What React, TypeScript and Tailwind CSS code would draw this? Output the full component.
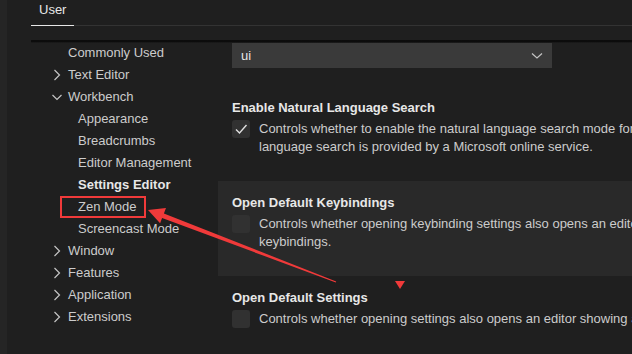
import React from 'react'

const font = { fontFamily: '"Liberation Sans", Arial, sans-serif' }

type NavItem = { label: string; level: 1 | 2; chevron?: 'right' | 'down'; bold?: boolean }

const nav: NavItem[] = [
  { label: 'Commonly Used', level: 1 },
  { label: 'Text Editor', level: 1, chevron: 'right' },
  { label: 'Workbench', level: 1, chevron: 'down' },
  { label: 'Appearance', level: 2 },
  { label: 'Breadcrumbs', level: 2 },
  { label: 'Editor Management', level: 2 },
  { label: 'Settings Editor', level: 2, bold: true },
  { label: 'Zen Mode', level: 2 },
  { label: 'Screencast Mode', level: 2 },
  { label: 'Window', level: 1, chevron: 'right' },
  { label: 'Features', level: 1, chevron: 'right' },
  { label: 'Application', level: 1, chevron: 'right' },
  { label: 'Extensions', level: 1, chevron: 'right' },
]

function Chevron({ dir }: { dir: 'right' | 'down' }) {
  return (
    <svg width="16" height="16" viewBox="0 0 16 16" className="shrink-0 text-[#c5c5c5]">
      {dir === 'right' ? (
        <path d="M2.5 3l5 5-5 5" fill="none" stroke="currentColor" strokeWidth="1.2" />
      ) : (
        <path d="M0.5 6l4.5 4.5L9.5 6" fill="none" stroke="currentColor" strokeWidth="1.2" />
      )}
    </svg>
  )
}

function Checkbox({ checked }: { checked?: boolean }) {
  return (
    <div className="w-[18px] h-[18px] shrink-0 rounded-[3px] bg-[#313131] flex items-center justify-center">
      {checked && (
        <svg width="18" height="18" viewBox="0 0 18 18">
          <path d="M4 9.5l3.5 3.5L14.5 5" fill="none" stroke="#e0e0e0" strokeWidth="1.4" />
        </svg>
      )}
    </div>
  )
}

function Setting({ title, lines, checked, focused }: { title: string; lines: string[]; checked?: boolean; focused?: boolean }) {
  return (
    <div className={`pl-[14px] pt-3 pb-[25px] ${focused ? 'bg-[#292929]' : ''}`}>
      <div className="text-[13px] leading-[18px] font-bold text-[#e7e7e7] whitespace-nowrap translate-y-px">{title}</div>
      <div className="flex mt-[4px] gap-[9px]">
        <Checkbox checked={checked} />
        <div className="text-[13px] leading-[18px] text-[#cccccc] whitespace-nowrap">
          {lines.map((l) => (
            <div key={l}>{l}</div>
          ))}
        </div>
      </div>
    </div>
  )
}

export default function App() {
  return (
    <div className="w-[632px] h-[354px] overflow-hidden bg-[#1f1f1f] flex relative" style={font}>
      <div className="w-[7px] bg-[#252525] shrink-0" />
      <div className="flex-1 flex flex-col pl-[24px] min-w-0">
        {/* tab header */}
        <div className="h-[26px] shrink-0 flex border-b border-[#333333]">
          <div className="px-2 pb-[5px] text-[13px] leading-[20px] text-[#e7e7e7] border-b border-[#e7e7e7] -mb-px">User</div>
        </div>
        <div className="h-[14px] shrink-0" />
        <div className="flex-1 flex relative min-h-0">
          <div className="absolute top-0 left-0 right-0 h-[3px] bg-gradient-to-b from-[#0c0c0c] via-[#0c0c0c] to-transparent" />
          {/* sidebar */}
          <div className="w-[187px] shrink-0 pt-[2px]">
            {nav.map((item) => (
              <div
                key={item.label}
                className={`h-[22px] flex items-center text-[13px] whitespace-nowrap ${item.level === 1 ? 'pl-[21px]' : 'pl-[47px]'} ${item.bold ? 'font-bold text-[#e7e7e7]' : 'text-[#cccccc]'}`}
              >
                {item.level === 1 && (item.chevron ? <Chevron dir={item.chevron} /> : <div className="w-4 shrink-0" />)}
                <span>{item.label}</span>
              </div>
            ))}
          </div>
          {/* settings list */}
          <div className="flex-1 min-w-0">
            <div className="pl-[14px] pt-[3px] pb-[18px]">
              <div className="w-[320px] h-[25px] bg-[#3a3a3a] flex items-center justify-between pl-[9px] pr-[9px] text-[13px] text-[#e7e7e7]">
                <span>ui</span>
                <svg width="12" height="8" viewBox="0 0 12 8">
                  <path d="M1 1.5l5 4.5 5-4.5" fill="none" stroke="#c5c5c5" strokeWidth="1.2" />
                </svg>
              </div>
            </div>
            <Setting
              title="Enable Natural Language Search"
              checked
              lines={[
                'Controls whether to enable the natural language search mode for settings. The natural',
                'language search is provided by a Microsoft online service.',
              ]}
            />
            <Setting
              title="Open Default Keybindings"
              focused
              lines={[
                'Controls whether opening keybinding settings also opens an editor showing all default',
                'keybindings.',
              ]}
            />
            <Setting
              title="Open Default Settings"
              lines={['Controls whether opening settings also opens an editor showing all default settings.']}
            />
          </div>
        </div>
      </div>

      {/* annotation: red box and arrow */}
      <div className="absolute left-[60px] top-[196px] w-[86px] h-[22px] border-2 border-[#f03a3a]" />
      <svg className="absolute left-0 top-0 pointer-events-none" width="632" height="354">
        <polygon
          points="148,210 166,208 163.9,213.4 336.2,281.5 335.8,282.5 162.1,218 160.1,223.2"
          fill="#f03a3a"
        />
        <polygon points="395,281 405,281 400,289" fill="#f03a3a" />
      </svg>
    </div>
  )
}
